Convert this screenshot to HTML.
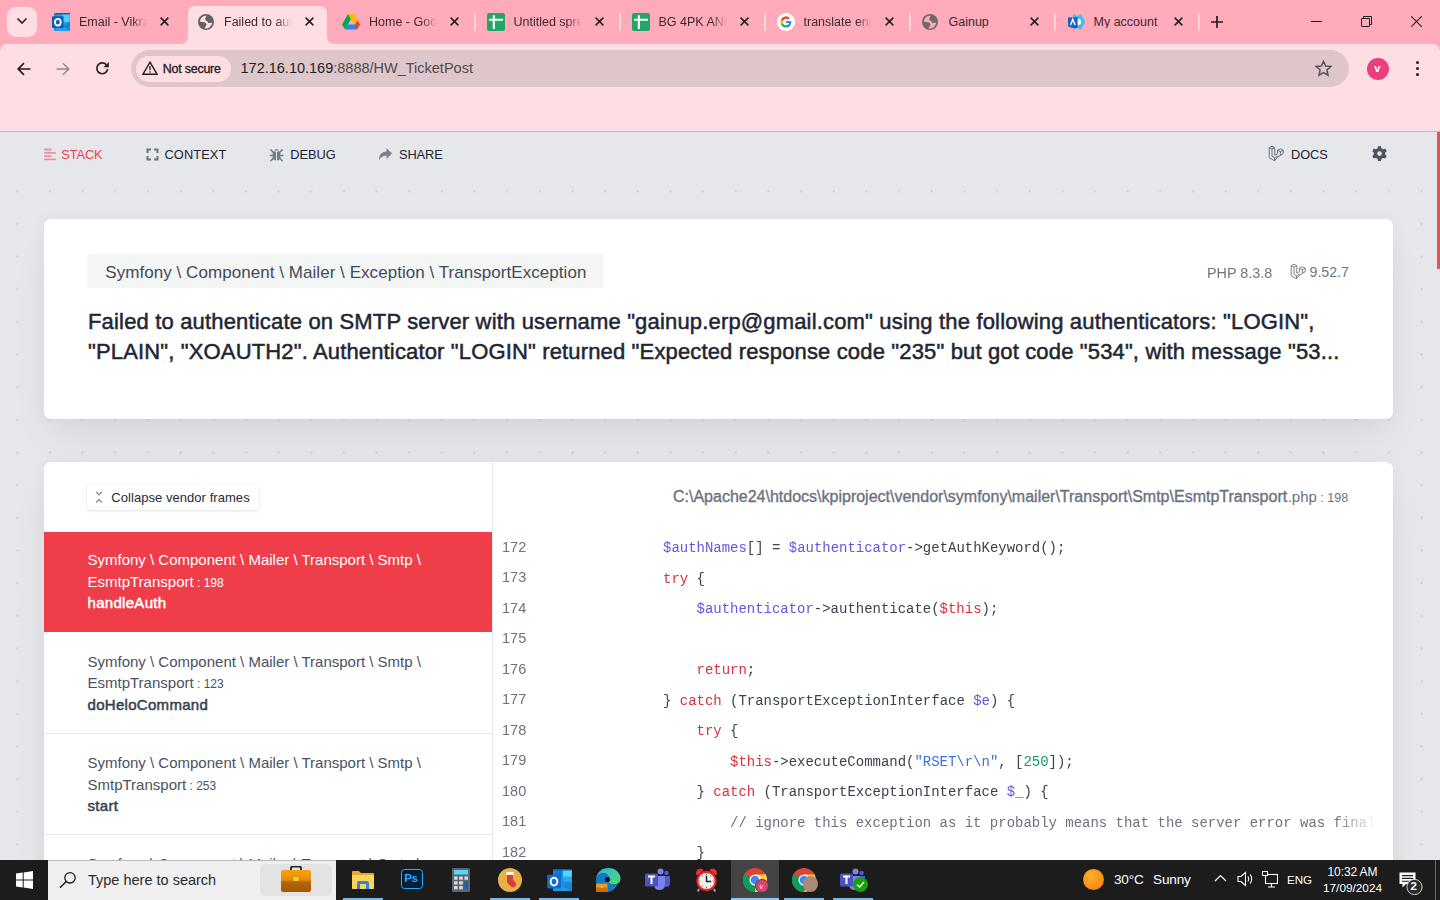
<!DOCTYPE html>
<html>
<head>
<meta charset="utf-8">
<style>
*{box-sizing:border-box;margin:0;padding:0}
html,body{width:1440px;height:900px;overflow:hidden;background:#e5e7eb;font-family:"Liberation Sans",sans-serif}
.a{position:absolute}
.t{position:absolute;white-space:pre;line-height:1}
/* chrome */
#tabstrip{left:0;top:0;width:1440px;height:56px;background:#ffabbb}
#toolbar{left:0;top:44px;width:1440px;height:88px;background:#ffdee3;border-bottom:1px solid #cdb1b7;border-radius:7px 7px 0 0}
.tabtitle{font-size:12.5px;color:#3b2a2e;top:15px;overflow:hidden;width:68px;-webkit-mask-image:linear-gradient(90deg,#000 78%,transparent 100%)}
.tabx{font-size:15px;color:#2a2a2a;top:13px}
.sep{width:2px;height:18px;top:13px;background:#ffd3da;border-radius:1px}
/* page */
#page{left:0;top:132px;width:1440px;height:728px;background-color:#e5e7eb;overflow:hidden}
#dots{left:0;top:0;width:1440px;height:728px;
 background-image:radial-gradient(circle at 1.5px 1.5px,#cacdd2 0,#d0d3d8 .9px,transparent 1.5px);
 background-size:32.67px 32.67px;background-position:15.8px 25.1px}
.card{background:#fff;border-radius:7px;box-shadow:0 22px 40px -8px rgba(0,0,0,.07),0 0 20px rgba(0,0,0,.035)}
.ln{left:502px;font-size:14.5px;color:#6b7280}
.code{font-family:"Liberation Mono",monospace;font-size:13.97px;line-height:0;margin-top:-3.7px}
#codebox{left:0;top:0;width:1440px;height:860px;-webkit-mask-image:linear-gradient(90deg,#000 1335px,transparent 1376px)}
.msg{font-size:22px;color:#1f2633;letter-spacing:.17px;-webkit-text-stroke:.5px #1f2633}
#navbg{left:0;top:132px;width:1437px;height:44px;background:#e5e7eb}
/* taskbar */
#taskbar{left:0;top:860px;width:1440px;height:40px;background:#1c1c1c}
</style>
</head>
<body>
<!-- ============ BROWSER CHROME ============ -->
<div id="tabstrip" class="a"></div>
<!-- tab search dropdown -->
<div class="a" style="left:7px;top:7px;width:30px;height:30px;border-radius:9px;background:#ffdee3"></div>
<svg class="a" style="left:16px;top:17px" width="12" height="8" viewBox="0 0 12 8"><path d="M1.5 1.5 L6 6 L10.5 1.5" fill="none" stroke="#2b2b2b" stroke-width="1.7"/></svg>
<!-- active tab -->
<svg class="a" style="left:180px;top:6px" width="156" height="38" viewBox="0 0 156 38"><path d="M0 38 Q8 38 8 30 L8 8 Q8 0 16 0 L139 0 Q147 0 147 8 L147 30 Q147 38 156 38 Z" fill="#ffdee3"/></svg>
<!-- tab 1 outlook -->
<svg class="a" style="left:52px;top:13px" width="19" height="18" viewBox="0 0 19 18"><rect x="2" y="0" width="16" height="18" rx=".8" fill="#1d8ee0"/><rect x="3.3" y="1.2" width="7" height="8" fill="#1a9ae8"/><rect x="10.3" y="1.2" width="7.5" height="8" fill="#4dd0f7"/><rect x="3.3" y="0" width="14.5" height="1.3" fill="#0b5cad"/><path d="M8 11.5 L18 8.5 V18 H2Z" fill="#2a9ff0"/><path d="M11 13 L18 8.5 V18Z" fill="#1b84d6"/><rect x="0" y="3.3" width="11.6" height="11.8" rx=".8" fill="#0f5db5"/><ellipse cx="5.8" cy="9.2" rx="2.9" ry="3.3" fill="none" stroke="#fff" stroke-width="1.8"/></svg>
<div class="t tabtitle" style="left:79px;top:15.5px">Email - Vikram</div>
<!-- close icons -->
<svg class="a tx" style="left:160px;top:17px" width="9" height="9" viewBox="0 0 9 9"><path d="M.6 .6 8.4 8.4 M8.4 .6 .6 8.4" stroke="#1f1f1f" stroke-width="1.5"/></svg>
<!-- tab 2 globe -->
<svg class="a" style="left:198px;top:14px" width="16" height="16" viewBox="0 0 16 16"><circle cx="8" cy="8" r="8" fill="#5f6368"/><path d="M1.8 7.6 A6.2 6.2 0 0 1 8.6 1.8 L7.2 4.4 L7.3 6.1 L9.4 7.4 L10.6 9.3 L14.2 8.6 A6.2 6.2 0 0 1 6.4 14.2 L7.8 12.2 L8.6 10.4 L7.3 8.6 L4.4 7.9 Z" fill="#ffdee3"/></svg>
<div class="t tabtitle" style="left:224px;top:15.5px">Failed to authenticate</div>
<svg class="a tx" style="left:305px;top:17px" width="9" height="9" viewBox="0 0 9 9"><path d="M.6 .6 8.4 8.4 M8.4 .6 .6 8.4" stroke="#1f1f1f" stroke-width="1.5"/></svg>
<!-- tab 3 drive -->
<svg class="a" style="left:342px;top:14px" width="18" height="16" viewBox="0 0 18 16"><path d="M6 0 L12 0 L18 10.5 L15 15.5 Z" fill="#ffba00"/><path d="M6 0 L9 5.2 L3 15.5 L0 10.5Z" fill="#00ac47"/><path d="M3 15.5 L6 10.5 L18 10.5 L15 15.5Z" fill="#2684fc"/><path d="M15 15.5 L18 10.5 L15.5 6.2 L12.7 11Z" fill="#ea4335"/></svg>
<div class="t tabtitle" style="left:369px;top:15.5px">Home - Google Drive</div>
<svg class="a tx" style="left:450px;top:17px" width="9" height="9" viewBox="0 0 9 9"><path d="M.6 .6 8.4 8.4 M8.4 .6 .6 8.4" stroke="#1f1f1f" stroke-width="1.5"/></svg>
<div class="a sep" style="left:474px"></div>
<!-- tab 4 sheets -->
<svg class="a" style="left:487px;top:13px" width="18" height="18" viewBox="0 0 18 18"><rect width="18" height="18" rx="2" fill="#23a566"/><path d="M2 6.8 H16 M6.8 2.2 V16" stroke="#fff" stroke-width="2.1"/></svg>
<div class="t tabtitle" style="left:513.5px;top:15.5px">Untitled spreadsheet</div>
<svg class="a tx" style="left:595px;top:17px" width="9" height="9" viewBox="0 0 9 9"><path d="M.6 .6 8.4 8.4 M8.4 .6 .6 8.4" stroke="#1f1f1f" stroke-width="1.5"/></svg>
<div class="a sep" style="left:619px"></div>
<!-- tab 5 sheets -->
<svg class="a" style="left:632px;top:13px" width="18" height="18" viewBox="0 0 18 18"><rect width="18" height="18" rx="2" fill="#23a566"/><path d="M2 6.8 H16 M6.8 2.2 V16" stroke="#fff" stroke-width="2.1"/></svg>
<div class="t tabtitle" style="left:658.5px;top:15.5px">BG 4PK ANKLE</div>
<svg class="a tx" style="left:740px;top:17px" width="9" height="9" viewBox="0 0 9 9"><path d="M.6 .6 8.4 8.4 M8.4 .6 .6 8.4" stroke="#1f1f1f" stroke-width="1.5"/></svg>
<div class="a sep" style="left:764px"></div>
<!-- tab 6 google -->
<svg class="a" style="left:777px;top:13px" width="18" height="18" viewBox="0 0 18 18"><circle cx="9" cy="9" r="9" fill="#fff"/>
 <path d="M14.3 9.1c0-.4 0-.7-.1-1.1H9v2.1h3a2.6 2.6 0 0 1-1.1 1.7v1.4h1.8c1-1 1.6-2.4 1.6-4.1z" fill="#4285f4"/>
 <path d="M9 14.5c1.5 0 2.7-.5 3.7-1.3l-1.8-1.4c-.5.3-1.1.5-1.9.5-1.4 0-2.7-1-3.1-2.3H4v1.4a5.5 5.5 0 0 0 5 3.1z" fill="#34a853"/>
 <path d="M5.9 10c-.1-.3-.2-.7-.2-1s.1-.7.2-1V6.6H4a5.5 5.5 0 0 0 0 4.9z" fill="#fbbc05"/>
 <path d="M9 5.7c.8 0 1.6.3 2.2.8l1.6-1.6A5.5 5.5 0 0 0 4 6.6L5.9 8c.4-1.3 1.7-2.3 3.1-2.3z" fill="#ea4335"/></svg>
<div class="t tabtitle" style="left:803.5px;top:15.5px">translate english</div>
<svg class="a tx" style="left:885px;top:17px" width="9" height="9" viewBox="0 0 9 9"><path d="M.6 .6 8.4 8.4 M8.4 .6 .6 8.4" stroke="#1f1f1f" stroke-width="1.5"/></svg>
<div class="a sep" style="left:909px"></div>
<!-- tab 7 globe -->
<svg class="a" style="left:922px;top:14px" width="16" height="16" viewBox="0 0 16 16"><circle cx="8" cy="8" r="8" fill="#6e6a6c"/><path d="M1.8 7.6 A6.2 6.2 0 0 1 8.6 1.8 L7.2 4.4 L7.3 6.1 L9.4 7.4 L10.6 9.3 L14.2 8.6 A6.2 6.2 0 0 1 6.4 14.2 L7.8 12.2 L8.6 10.4 L7.3 8.6 L4.4 7.9 Z" fill="#ffabbb"/></svg>
<div class="t tabtitle" style="left:948.5px;top:15.5px;-webkit-mask-image:none">Gainup</div>
<svg class="a tx" style="left:1030px;top:17px" width="9" height="9" viewBox="0 0 9 9"><path d="M.6 .6 8.4 8.4 M8.4 .6 .6 8.4" stroke="#1f1f1f" stroke-width="1.5"/></svg>
<div class="a sep" style="left:1054px"></div>
<!-- tab 8 my account -->
<svg class="a" style="left:1068px;top:14px" width="17" height="16" viewBox="0 0 17 16"><path d="M5 .5 H7 L7.6 1.8 H11 L11.6 .5 H13.4 L14 2.8 L16.6 6.6 V9.4 L14 13.2 L13.4 15.5 H11.6 L11 14.2 H7.6 L7 15.5 H5Z" fill="#3bbdf2"/><circle cx="10" cy="8" r="3.2" fill="#f2f8fc"/><rect x="0" y="3.3" width="9.6" height="9.4" fill="#1464c4"/><rect x="2.5" y="12.7" width="7" height="1" fill="#0b3f80"/><path d="M2.5 11 L4.8 5.4 L7.1 11" fill="none" stroke="#e8f2fb" stroke-width="1.6"/></svg>
<div class="t tabtitle" style="left:1093.5px;top:15.5px;width:80px;-webkit-mask-image:none">My account</div>
<svg class="a tx" style="left:1174px;top:17px" width="9" height="9" viewBox="0 0 9 9"><path d="M.6 .6 8.4 8.4 M8.4 .6 .6 8.4" stroke="#1f1f1f" stroke-width="1.5"/></svg>
<div class="a sep" style="left:1198px"></div>
<!-- new tab + -->
<svg class="a" style="left:1211px;top:16px" width="12" height="12" viewBox="0 0 12 12"><path d="M6 0 V12 M0 6 H12" stroke="#1f1f1f" stroke-width="1.7"/></svg>
<!-- window controls -->
<div class="a" style="left:1311px;top:21px;width:11px;height:1px;background:#1a1a1a"></div>
<svg class="a" style="left:1361px;top:16px" width="11" height="11" viewBox="0 0 11 11"><rect x="0.5" y="2.5" width="8" height="8" rx=".5" fill="none" stroke="#1a1a1a"/><path d="M2.5 2.5 V.5 H10.5 V8.5 H8.5" fill="none" stroke="#1a1a1a"/></svg>
<svg class="a" style="left:1411px;top:16px" width="11" height="11" viewBox="0 0 11 11"><path d="M.3 .3 10.7 10.7 M10.7 .3 .3 10.7" stroke="#1a1a1a" stroke-width="1.05"/></svg>

<div id="toolbar" class="a"></div>
<!-- nav buttons -->
<svg class="a" style="left:17px;top:62px" width="14" height="14" viewBox="0 0 14 14"><path d="M13.5 7 H1.5 M7 1.2 L1.2 7 L7 12.8" fill="none" stroke="#1f1f1f" stroke-width="1.7"/></svg>
<svg class="a" style="left:56px;top:62px" width="14" height="14" viewBox="0 0 14 14"><path d="M.5 7 H12.5 M7 1.2 L12.8 7 L7 12.8" fill="none" stroke="#8f8a8b" stroke-width="1.5"/></svg>
<svg class="a" style="left:95px;top:61px" width="15" height="15" viewBox="0 0 15 15"><path d="M12.6 8.2 A5.4 5.4 0 1 1 11.2 3.6" fill="none" stroke="#1f1f1f" stroke-width="1.7"/><path d="M13.8 1 V6.3 H8.5Z" fill="#1f1f1f"/></svg>
<!-- omnibox -->
<div class="a" style="left:131px;top:50px;width:1218px;height:37px;border-radius:18.5px;background:#dfc6ca"></div>
<div class="a" style="left:136px;top:55.5px;width:95px;height:26px;border-radius:13px;background:#ffdee3"></div>
<svg class="a" style="left:142px;top:61px" width="16" height="14" viewBox="0 0 16 14"><path d="M8 1.2 L15 13.2 H1 Z" fill="none" stroke="#1f1f1f" stroke-width="1.4" stroke-linejoin="miter"/><path d="M8 5 V9.3" stroke="#1f1f1f" stroke-width="1.3"/><circle cx="8" cy="11" r=".8" fill="#1f1f1f"/></svg>
<div class="t" style="left:162.8px;top:62.9px;font-size:12.4px;color:#1f1f1f;letter-spacing:-.2px;-webkit-text-stroke:.35px #1f1f1f">Not secure</div>
<div class="t" style="left:240.5px;top:61.2px;font-size:14.5px;color:#1f1f1f">172.16.10.169<span style="color:#514a4c">:8888/HW_TicketPost</span></div>
<!-- star -->
<svg class="a" style="left:1315px;top:60px" width="17" height="17" viewBox="0 0 17 17"><path d="M8.5 1.3 L10.6 6 L15.8 6.5 L11.9 10 L13 15.2 L8.5 12.5 L4 15.2 L5.1 10 L1.2 6.5 L6.4 6 Z" fill="none" stroke="#5a5556" stroke-width="1.5" stroke-linejoin="miter"/></svg>
<!-- avatar -->
<div class="a" style="left:1367px;top:58px;width:22px;height:22px;border-radius:50%;background:#e93f7f"></div>
<div class="t" style="left:1374.3px;top:63px;font-size:11px;color:#fff;font-weight:700">v</div>
<!-- menu -->
<div class="a" style="left:1415.5px;top:61px;width:3px;height:3px;border-radius:50%;background:#1f1f1f;box-shadow:0 6px 0 #1f1f1f,0 12px 0 #1f1f1f"></div>

<!-- ============ PAGE ============ -->
<div id="page" class="a">
  <div id="dots" class="a"></div>
</div>
<div id="navbg" class="a"></div>
<div class="a" style="left:1437px;top:132px;width:3px;height:137px;background:#eb4f58"></div>
<!-- nav -->
<svg class="a" style="left:43px;top:148px" width="14" height="13" viewBox="0 0 14 13"><g stroke="#e8939b" stroke-width="1.8" stroke-linecap="round"><path d="M1.9 1.5 H7.9 M1.9 4.9 H12.2 M1.9 8.1 H7.9 M1.9 11.3 H12.2"/></g></svg>
<div class="t" style="left:61.3px;top:149.2px;font-size:12.8px;color:#ef3e4a;letter-spacing:-.1px">STACK</div>
<svg class="a" style="left:146px;top:148px" width="13" height="13" viewBox="0 0 13 13"><g fill="none" stroke="#6b7280" stroke-width="2"><path d="M1.5 5 V1.5 H5 M8 1.5 H11.5 V5 M11.5 8 V11.5 H8 M5 11.5 H1.5 V8"/></g></svg>
<div class="t" style="left:164.5px;top:149.2px;font-size:12.8px;color:#1e2533;letter-spacing:.1px">CONTEXT</div>
<svg class="a" style="left:269px;top:147px" width="15" height="15" viewBox="0 0 15 15"><g fill="#767d88"><path d="M4.9 3.6 Q7.5 .6 10.1 3.6Z"/><path d="M3.6 4.5 H7 V13.6 Q4.2 13.2 3.6 10.5Z M8 4.5 H11.4 V10.5 Q10.8 13.2 8 13.6Z"/></g><g stroke="#767d88" stroke-width="1.5" stroke-linecap="round"><path d="M1.8 2.9 L4 5 M13.2 2.9 L11 5 M1.3 8.5 H3.8 M13.7 8.5 H11.2 M1.8 13.7 L4 11.6 M13.2 13.7 L11 11.6"/></g></svg>
<div class="t" style="left:290.3px;top:149.2px;font-size:12.8px;color:#1e2533;letter-spacing:-.05px">DEBUG</div>
<svg class="a" style="left:378px;top:148px" width="15" height="13" viewBox="0 0 15 13"><path d="M14.1 5.6 L8.6 .3 V3.5 C3.6 3.7 .9 6.8 1 12.3 C2.3 9.3 4.7 7.6 8.6 7.7 V10.9Z" fill="#7b818b"/></svg>
<div class="t" style="left:399px;top:149.2px;font-size:12.8px;color:#1e2533;letter-spacing:-.1px">SHARE</div>
<svg class="a" style="left:1268px;top:145px" width="17" height="17" viewBox="0 0 17 17"><g fill="none" stroke="#6b7280" stroke-width="1" stroke-linejoin="round"><path d="M1.2 2.7 L4 1.2 L6.8 2.7 V10.2 L9.6 8.7 V5.2 L12.4 3.7 L15.2 5.2 V8.7 L9.4 12 L6.5 15.8 L1.2 12.7 Z"/><path d="M1.2 2.7 L4 4.2 L6.8 2.7 M4 4.2 V11.3 L6.5 12.8 L9.6 11.1 M9.6 5.2 L12.4 6.7 L15.2 5.2 M12.4 6.7 V10.2 M6.5 12.8 V15.8"/></g></svg>
<div class="t" style="left:1291px;top:149.2px;font-size:12.8px;color:#1e2533;letter-spacing:-.05px">DOCS</div>
<svg class="a" style="left:1371px;top:145px" width="17" height="17" viewBox="0 0 17 17"><path fill="#4b5360" fill-rule="evenodd" d="M7 1.2 H10 L10.5 3.4 L12.1 4.3 L14.2 3.6 L15.7 6.2 L14.1 7.7 V9.5 L15.7 11 L14.2 13.6 L12.1 12.9 L10.5 13.8 L10 16 H7 L6.5 13.8 L4.9 12.9 L2.8 13.6 L1.3 11 L2.9 9.5 V7.7 L1.3 6.2 L2.8 3.6 L4.9 4.3 L6.5 3.4 Z M8.5 6.3 A2.3 2.3 0 1 0 8.5 10.9 A2.3 2.3 0 1 0 8.5 6.3Z"/></svg>

<!-- exception card -->
<div class="a card" style="left:44px;top:219px;width:1349px;height:200px"></div>
<div class="a" style="left:87px;top:254px;width:516px;height:34px;background:#f4f6f6;border-radius:2px"></div>
<div class="t" style="left:105.3px;top:263.8px;font-size:17px;color:#434a57;letter-spacing:.05px">Symfony \ Component \ Mailer \ Exception \ TransportException</div>
<div class="t" style="left:1207px;top:264.5px;font-size:15px;color:#6f7682;transform:scaleX(.96);transform-origin:0 0">PHP 8.3.8</div>
<svg class="a" style="left:1290px;top:263px" width="17" height="17" viewBox="0 0 17 17"><g fill="none" stroke="#7b818b" stroke-width="1" stroke-linejoin="round"><path d="M1.2 2.7 L4 1.2 L6.8 2.7 V10.2 L9.6 8.7 V5.2 L12.4 3.7 L15.2 5.2 V8.7 L9.4 12 L6.5 15.8 L1.2 12.7 Z"/><path d="M1.2 2.7 L4 4.2 L6.8 2.7 M4 4.2 V11.3 L6.5 12.8 L9.6 11.1 M9.6 5.2 L12.4 6.7 L15.2 5.2 M12.4 6.7 V10.2 M6.5 12.8 V15.8"/></g></svg>
<div class="t" style="left:1309.5px;top:264.5px;font-size:14.2px;color:#6f7682">9.52.7</div>
<div class="t msg" style="left:88px;top:311.3px">Failed to authenticate on SMTP server with username "gainup.erp@gmail.com" using the following authenticators: "LOGIN",</div>
<div class="t msg" style="left:88px;top:341.1px;letter-spacing:.15px">"PLAIN", "XOAUTH2". Authenticator "LOGIN" returned "Expected response code "235" but got code "534", with message "53...</div>

<!-- frames + code card -->
<div class="a card" style="left:44px;top:462px;width:1349px;height:460px"></div>
<div class="a" style="left:492px;top:462px;width:1px;height:400px;background:#e5e7eb"></div>
<!-- collapse button -->
<div class="a" style="left:87px;top:484px;width:172px;height:26px;background:#fff;border-radius:3px;box-shadow:0 0 0 1px rgba(0,0,0,.015),0 1px 3px rgba(0,0,0,.1)"></div>
<svg class="a" style="left:94px;top:491px" width="10" height="13" viewBox="0 0 10 13"><path d="M2.2 1 L5 4 L7.8 1 M2.2 11.5 L5 8.5 L7.8 11.5" fill="none" stroke="#7b818b" stroke-width="1.1"/></svg>
<div class="t" style="left:111.3px;top:490.6px;font-size:13px;color:#252c38;letter-spacing:.05px">Collapse vendor frames</div>

<!-- frame 1 selected -->
<div class="a" style="left:44px;top:532px;width:448px;height:100px;background:#ef3e4a"></div>
<div class="t" style="left:87.5px;top:552.3px;font-size:15px;color:#fff">Symfony \ Component \ Mailer \ Transport \ Smtp \</div>
<div class="t" style="left:87.5px;top:573.8px;font-size:15px;color:#fff">EsmtpTransport<span style="font-size:12px"> : 198</span></div>
<div class="t" style="left:87.5px;top:595.3px;font-size:15px;letter-spacing:.3px;color:#fff;-webkit-text-stroke:.5px #fff">handleAuth</div>
<!-- frame 2 -->
<div class="t" style="left:87.5px;top:653.8px;font-size:15px;color:#4a5261">Symfony \ Component \ Mailer \ Transport \ Smtp \</div>
<div class="t" style="left:87.5px;top:675.1px;font-size:15px;color:#4a5261">EsmtpTransport<span style="font-size:12px"> : 123</span></div>
<div class="t" style="left:87.5px;top:696.6px;font-size:15px;letter-spacing:.3px;color:#374151;-webkit-text-stroke:.5px #374151">doHeloCommand</div>
<div class="a" style="left:44px;top:733px;width:448px;height:1px;background:#e5e7eb"></div>
<!-- frame 3 -->
<div class="t" style="left:87.5px;top:755px;font-size:15px;color:#4a5261">Symfony \ Component \ Mailer \ Transport \ Smtp \</div>
<div class="t" style="left:87.5px;top:776.6px;font-size:15px;color:#4a5261">SmtpTransport<span style="font-size:12px"> : 253</span></div>
<div class="t" style="left:87.5px;top:798.3px;font-size:15px;letter-spacing:.3px;color:#374151;-webkit-text-stroke:.5px #374151">start</div>
<div class="a" style="left:44px;top:834px;width:448px;height:1px;background:#e5e7eb"></div>
<!-- frame 4 -->
<div class="t" style="left:87.5px;top:856px;font-size:15px;color:#4a5261">Symfony \ Component \ Mailer \ Transport \ Smtp \</div>

<!-- code header -->
<div class="t" style="left:673px;top:489.3px;font-size:15px;color:#6b7280"><span style="font-size:16px;-webkit-text-stroke:.35px #6b7280;display:inline-block;width:614.7px">C:\Apache24\htdocs\kpiproject\vendor\symfony\mailer\Transport\Smtp\EsmtpTransport</span>.php<span style="font-size:12.5px"> : 198</span></div>

<!-- code lines -->
<div id="codebox" class="a">
<div class="t ln" style="top:539.7px">172</div>
<div class="t code" style="top:552.0px;left:663.0px"><span style="color:#6456de">$authNames</span><span style="color:#3a4250">[] = </span><span style="color:#6456de">$authenticator</span><span style="color:#3a4250">-&gt;getAuthKeyword();</span></div>
<div class="t ln" style="top:570.2px">173</div>
<div class="t code" style="top:582.5px;left:663.0px"><span style="color:#dc2f3d">try</span><span style="color:#3a4250"> {</span></div>
<div class="t ln" style="top:600.7px">174</div>
<div class="t code" style="top:613.0px;left:696.5px"><span style="color:#6456de">$authenticator</span><span style="color:#3a4250">-&gt;authenticate(</span><span style="color:#dc2f3d">$this</span><span style="color:#3a4250">);</span></div>
<div class="t ln" style="top:631.2px">175</div>
<div class="t ln" style="top:661.7px">176</div>
<div class="t code" style="top:674.0px;left:696.5px"><span style="color:#dc2f3d">return</span><span style="color:#3a4250">;</span></div>
<div class="t ln" style="top:692.2px">177</div>
<div class="t code" style="top:704.5px;left:663.0px"><span style="color:#3a4250">} </span><span style="color:#dc2f3d">catch</span><span style="color:#3a4250"> (TransportExceptionInterface </span><span style="color:#6456de">$e</span><span style="color:#3a4250">) {</span></div>
<div class="t ln" style="top:722.7px">178</div>
<div class="t code" style="top:735.0px;left:696.5px"><span style="color:#dc2f3d">try</span><span style="color:#3a4250"> {</span></div>
<div class="t ln" style="top:753.2px">179</div>
<div class="t code" style="top:765.5px;left:730.0px"><span style="color:#dc2f3d">$this</span><span style="color:#3a4250">-&gt;executeCommand(</span><span style="color:#3b70e0">"RSET\r\n"</span><span style="color:#3a4250">, [</span><span style="color:#1a9a6a">250</span><span style="color:#3a4250">]);</span></div>
<div class="t ln" style="top:783.7px">180</div>
<div class="t code" style="top:796.0px;left:696.5px"><span style="color:#3a4250">} </span><span style="color:#dc2f3d">catch</span><span style="color:#3a4250"> (TransportExceptionInterface </span><span style="color:#6456de">$_</span><span style="color:#3a4250">) {</span></div>
<div class="t ln" style="top:814.2px">181</div>
<div class="t code" style="top:826.5px;left:730.0px"><span style="color:#6b7280">// ignore this exception as it probably means that the server error was final</span></div>
<div class="t ln" style="top:844.7px">182</div>
<div class="t code" style="top:857.0px;left:696.5px"><span style="color:#3a4250">}</span></div>
</div>
<!-- ============ TASKBAR ============ -->
<div id="taskbar" class="a"></div>
<!-- start -->
<svg class="a" style="left:16px;top:871px" width="17" height="18" viewBox="0 0 17 18"><path d="M0 2.6 L6.7 1.6 V8.5 H0Z M7.7 1.4 L17 0 V8.5 H7.7Z M0 9.5 H6.7 V16.4 L0 15.4Z M7.7 9.5 H17 V18 L7.7 16.6Z" fill="#fff"/></svg>
<!-- search box -->
<div class="a" style="left:48px;top:860px;width:288px;height:40px;background:#f0f0f0;border-top:1px solid #b9b9b9"></div>
<svg class="a" style="left:59px;top:871px" width="18" height="18" viewBox="0 0 18 18"><circle cx="11" cy="6.8" r="5.2" fill="none" stroke="#1a1a1a" stroke-width="1.3"/><path d="M7.3 10.5 L1 16.8" stroke="#1a1a1a" stroke-width="1.4"/></svg>
<div class="t" style="left:88px;top:872.5px;font-size:14.5px;color:#2a2a2a">Type here to search</div>
<div class="a" style="left:260px;top:864px;width:72px;height:32px;border-radius:6px;background:#e3e3e3"></div>
<svg class="a" style="left:280px;top:866px" width="32" height="27" viewBox="0 0 32 27"><defs><linearGradient id="bc" x1="0" y1="0" x2="0" y2="1"><stop offset="0" stop-color="#f5a30f"/><stop offset=".45" stop-color="#e88c07"/><stop offset=".55" stop-color="#b5650a"/><stop offset="1" stop-color="#a55807"/></linearGradient></defs><path d="M11 4 V2 Q11 .5 12.5 .5 H19.5 Q21 .5 21 2 V4" fill="none" stroke="#222" stroke-width="1.8"/><rect x="1" y="4" width="30" height="22" rx="2" fill="url(#bc)"/><rect x="13.5" y="11" width="5" height="4" rx=".8" fill="#ffd23a"/></svg>
<!-- taskbar icons -->
<svg class="a" style="left:352px;top:871px" width="22" height="18" viewBox="0 0 22 18"><path d="M0 1 Q0 0 1 0 H7 L9 2 H21 Q22 2 22 3 V17 Q22 18 21 18 H1 Q0 18 0 17Z" fill="#e9a825"/><rect x="0" y="4" width="22" height="14" rx="1" fill="#ffd35b"/><path d="M5 18 V12 Q5 10 7 10 H15 Q17 10 17 12 V18 H14 V13 H8 V18Z" fill="#2f86d6"/></svg>
<div class="a" style="left:343px;top:898px;width:40px;height:2px;background:#76b9ed"></div>
<div class="a" style="left:401px;top:868.5px;width:21.5px;height:20.5px;border-radius:3.5px;background:#001e36;border:1.6px solid #31a8ff"></div>
<div class="t" style="left:404.3px;top:873px;font-size:11.5px;font-weight:700;color:#31a8ff;letter-spacing:-.4px">Ps</div>
<svg class="a" style="left:452px;top:868px" width="18" height="24" viewBox="0 0 18 24"><rect width="18" height="24" rx="1.5" fill="#5d6470"/><rect x="2" y="2" width="14" height="4.5" fill="#57d6f5"/><g fill="#d8dde3"><rect x="2" y="8.5" width="3.6" height="3.2"/><rect x="7.2" y="8.5" width="3.6" height="3.2"/><rect x="12.4" y="8.5" width="3.6" height="3.2"/><rect x="2" y="13.3" width="3.6" height="3.2"/><rect x="7.2" y="13.3" width="3.6" height="3.2"/><rect x="2" y="18.1" width="3.6" height="3.2"/><rect x="7.2" y="18.1" width="3.6" height="3.2"/></g><rect x="12.4" y="13.3" width="3.6" height="8" fill="#1b5bb5"/></svg>
<!-- stocking icon -->
<div class="a" style="left:498px;top:868px;width:24px;height:24px;border-radius:50%;background:#e5b24a"></div>
<svg class="a" style="left:502px;top:870px" width="16" height="20" viewBox="0 0 16 20"><path d="M5 2 H11 V10 L13.5 12.5 Q15 14.5 13 16.5 Q11 18.3 9 16.6 L5 12.5Z" fill="#e03b3b"/><rect x="4.5" y="2" width="7" height="3" fill="#fff"/></svg>
<div class="a" style="left:490px;top:898px;width:40px;height:2px;background:#76b9ed"></div>
<!-- outlook -->
<svg class="a" style="left:547px;top:869px" width="25" height="22" viewBox="0 0 19 17"><rect x="4.5" y="0" width="14.5" height="17" rx=".6" fill="#1d8ee0"/><rect x="5.5" y="1" width="6.5" height="5" fill="#0f78d4"/><rect x="12" y="1" width="7" height="5" fill="#50d9ff"/><rect x="5.5" y="6" width="6.5" height="4" fill="#1490df"/><rect x="12" y="6" width="7" height="4" fill="#28a8ea"/><rect x="4.5" y="0" width="14.5" height="1.1" fill="#0a5cad"/><path d="M4.5 17 L19 10.5 V17Z" fill="#2aa8ef"/><path d="M4.5 10.5 L19 17 H4.5Z" fill="#1a9be8"/><path d="M12 13.5 L19 10.5 V17Z" fill="#1b84d6"/><rect x="0" y="4.5" width="10.5" height="10.5" rx=".6" fill="#0f6cc8"/><ellipse cx="5.25" cy="9.75" rx="2.6" ry="3" fill="none" stroke="#fff" stroke-width="1.5"/></svg>
<div class="a" style="left:539px;top:898px;width:40px;height:2px;background:#76b9ed"></div>
<!-- edge -->
<svg class="a" style="left:596px;top:868px" width="25" height="24" viewBox="0 0 25 24"><defs><linearGradient id="eg" x1="0" y1="0" x2="1" y2="1"><stop offset="0" stop-color="#2bb5e8"/><stop offset="1" stop-color="#4fdc6a"/></linearGradient></defs>
<path d="M12.5 0 C19.5 0 24.5 5 24.5 10.5 C24.5 14.5 21.5 16.5 17.5 16.5 C14 16.5 11.8 14.8 11.8 12.8 C11.8 11.8 12.8 11.2 12.8 9.6 C12.8 6.8 10.2 5.2 7 5.2 C3.8 5.2 .6 7.6 0 11 C.4 4.8 5.8 0 12.5 0Z" fill="url(#eg)"/>
<path d="M0 11 C.6 7.6 3.8 5.2 7 5.2 C10.2 5.2 12.8 6.8 12.8 9.6 C12.8 11.2 11.8 11.8 11.8 12.8 C11.8 14.8 14 16.5 17.5 16.5 C19.5 16.5 21 16 21.8 15.4 C20 20.5 15.5 24 10 24 C4.5 24 0 19.5 0 13Z" fill="#1479c9"/>
<circle cx="11.5" cy="11.5" r="2.6" fill="#141414"/>
<rect x="0" y="15.5" width="11.5" height="8.5" rx=".8" fill="#e99a1a"/><rect x="0" y="19.5" width="11.5" height="4.5" fill="#c0700c"/><rect x="5" y="18.5" width="1.6" height="1.6" fill="#ffd23a"/></svg>
<!-- teams -->
<svg class="a" style="left:645px;top:868px" width="25" height="23" viewBox="0 0 25 23"><circle cx="15.5" cy="3.5" r="3" fill="#7b83eb"/><circle cx="21.5" cy="5" r="2.3" fill="#5059c9"/><path d="M18 8 H25 V15 Q25 19 21.5 19 Q18 19 18 15Z" fill="#5059c9"/><path d="M9 8 H20 V16 Q20 22 14.5 22 Q9 22 9 16Z" fill="#7b83eb"/><rect x="0" y="5.5" width="13" height="13" rx="1.5" fill="#4b53bc"/><path d="M3 8.5 H10 M6.5 8.5 V16" stroke="#fff" stroke-width="2"/></svg>
<!-- alarm -->
<svg class="a" style="left:695px;top:868px" width="23" height="24" viewBox="0 0 23 24"><path d="M1 5.5 Q1 1 5.5 .8 Q7.5 .8 8.5 2.2 L2.3 7.6 Q1 7 1 5.5Z M22 5.5 Q22 1 17.5 .8 Q15.5 .8 14.5 2.2 L20.7 7.6 Q22 7 22 5.5Z" fill="#ee2f2f"/><path d="M4 21 L2.8 23.5 M19 21 L20.2 23.5" stroke="#9aa0a6" stroke-width="2"/><circle cx="11.5" cy="13" r="10.2" fill="#e8261f"/><circle cx="11.5" cy="13" r="8" fill="#f1f1f1"/><g fill="#333"><circle cx="11.5" cy="6.3" r=".6"/><circle cx="11.5" cy="19.7" r=".6"/><circle cx="4.8" cy="13" r=".6"/><circle cx="18.2" cy="13" r=".6"/><circle cx="7.7" cy="7.9" r=".5"/><circle cx="15.3" cy="7.9" r=".5"/><circle cx="7.7" cy="18.1" r=".5"/><circle cx="15.3" cy="18.1" r=".5"/></g><path d="M11.5 7.8 V13.4 H16.2" fill="none" stroke="#222" stroke-width="1.5"/></svg>
<!-- chrome active -->
<div class="a" style="left:731px;top:860px;width:48px;height:40px;background:#444"></div>
<div class="a" style="left:731px;top:898px;width:48px;height:2px;background:#8cc7f3"></div>
<svg class="a" style="left:743px;top:868px" width="24" height="24" viewBox="0 0 24 24"><circle cx="12" cy="12" r="12" fill="#db4437"/><path d="M12 12 L1.6 6 A12 12 0 0 0 12 24Z" fill="#0f9d58"/><path d="M12 12 L22.4 6 A12 12 0 0 1 12 24 Z" fill="#ffcd40"/><path d="M12 6.5 H22.4 A12 12 0 0 1 12 24 L17 15Z" fill="#ffcd40"/><circle cx="12" cy="12" r="5.5" fill="#fff"/><circle cx="12" cy="12" r="4.3" fill="#4285f4"/></svg>
<div class="a" style="left:755px;top:879px;width:14px;height:14px;border-radius:50%;background:#e0407a;border:1.2px solid #444"></div>
<div class="t" style="left:759.5px;top:882.5px;font-size:7px;color:#fff">v</div>
<!-- chrome 2 -->
<svg class="a" style="left:792px;top:868px" width="24" height="24" viewBox="0 0 24 24"><circle cx="12" cy="12" r="12" fill="#db4437"/><path d="M12 12 L1.6 6 A12 12 0 0 0 12 24Z" fill="#0f9d58"/><path d="M12 6.5 H22.4 A12 12 0 0 1 12 24 L17 15Z" fill="#ffcd40"/><circle cx="12" cy="12" r="5.5" fill="#fff"/><circle cx="12" cy="12" r="4.3" fill="#4285f4"/></svg>
<div class="a" style="left:803px;top:876px;width:15px;height:16px;border-radius:50%;background:#a88a78"></div>
<div class="a" style="left:784px;top:898px;width:40px;height:2px;background:#76b9ed"></div>
<!-- teams 2 -->
<svg class="a" style="left:840px;top:868px" width="25" height="23" viewBox="0 0 25 23"><circle cx="15.5" cy="3.5" r="3" fill="#7b83eb"/><circle cx="21.5" cy="5" r="2.3" fill="#5059c9"/><path d="M18 8 H25 V15 Q25 19 21.5 19 Q18 19 18 15Z" fill="#5059c9"/><path d="M9 8 H20 V16 Q20 22 14.5 22 Q9 22 9 16Z" fill="#7b83eb"/><rect x="0" y="5.5" width="13" height="13" rx="1.5" fill="#4b53bc"/><path d="M3 8.5 H10 M6.5 8.5 V16" stroke="#fff" stroke-width="2"/></svg>
<div class="a" style="left:853px;top:877px;width:15px;height:15px;border-radius:50%;background:#13a10e"></div>
<svg class="a" style="left:856px;top:881px" width="9" height="7" viewBox="0 0 9 7"><path d="M1 3.5 L3.5 6 L8 1" fill="none" stroke="#fff" stroke-width="1.5"/></svg>
<div class="a" style="left:833px;top:898px;width:40px;height:2px;background:#76b9ed"></div>
<!-- tray -->
<div class="a" style="left:1083px;top:869px;width:21px;height:21px;border-radius:50%;background:radial-gradient(circle at 40% 35%,#ffb02e,#f07b0c)"></div>
<div class="t" style="left:1114px;top:873.3px;font-size:13.6px;color:#fff;letter-spacing:-.2px">30°C<span style="margin-left:9.5px">Sunny</span></div>
<svg class="a" style="left:1214px;top:874px" width="13" height="8" viewBox="0 0 13 8"><path d="M1 7 L6.5 1.5 L12 7" fill="none" stroke="#fff" stroke-width="1.2"/></svg>
<svg class="a" style="left:1237px;top:871px" width="17" height="16" viewBox="0 0 17 16"><path d="M1 5.5 H4 L8.5 1.5 V14.5 L4 10.5 H1Z" fill="none" stroke="#fff" stroke-width="1.1"/><path d="M11 5.5 Q12.5 8 11 10.5 M13.3 3.5 Q16 8 13.3 12.5" fill="none" stroke="#fff" stroke-width="1.1"/></svg>
<svg class="a" style="left:1262px;top:871px" width="16" height="17" viewBox="0 0 16 17"><rect x="3.5" y="3.5" width="12" height="9" fill="none" stroke="#fff" stroke-width="1.1"/><rect x="0.5" y="0.5" width="5" height="4" fill="#1c1c1c" stroke="#fff" stroke-width="1"/><path d="M9.5 12.5 V15.5 M6 16 H13" stroke="#fff" stroke-width="1.1"/></svg>
<div class="t" style="left:1287px;top:873.5px;font-size:11.6px;color:#fff">ENG</div>
<div class="t" style="left:1327.5px;top:865.5px;font-size:12px;color:#fff;letter-spacing:-.1px">10:32 AM</div>
<div class="t" style="left:1323px;top:882.5px;font-size:11.8px;color:#fff">17/09/2024</div>
<svg class="a" style="left:1398px;top:871px" width="26" height="26" viewBox="0 0 26 26"><path d="M1.5 1.5 H17.5 V13 H8 L4.5 16.5 V13 H1.5Z" fill="#fff"/><path d="M4 4.6 H15 M4 7.4 H15 M4 10.2 H11" stroke="#1c1c1c" stroke-width="1.1"/><circle cx="16.5" cy="16" r="7.6" fill="#2b2b2b" stroke="#cfcfcf" stroke-width="1"/></svg>
<div class="t" style="left:1410.5px;top:880.5px;font-size:11.5px;font-weight:700;color:#fff">2</div>
<div class="a" style="left:1435px;top:860px;width:1px;height:40px;background:#6a6a6a"></div>
</body>
</html>
